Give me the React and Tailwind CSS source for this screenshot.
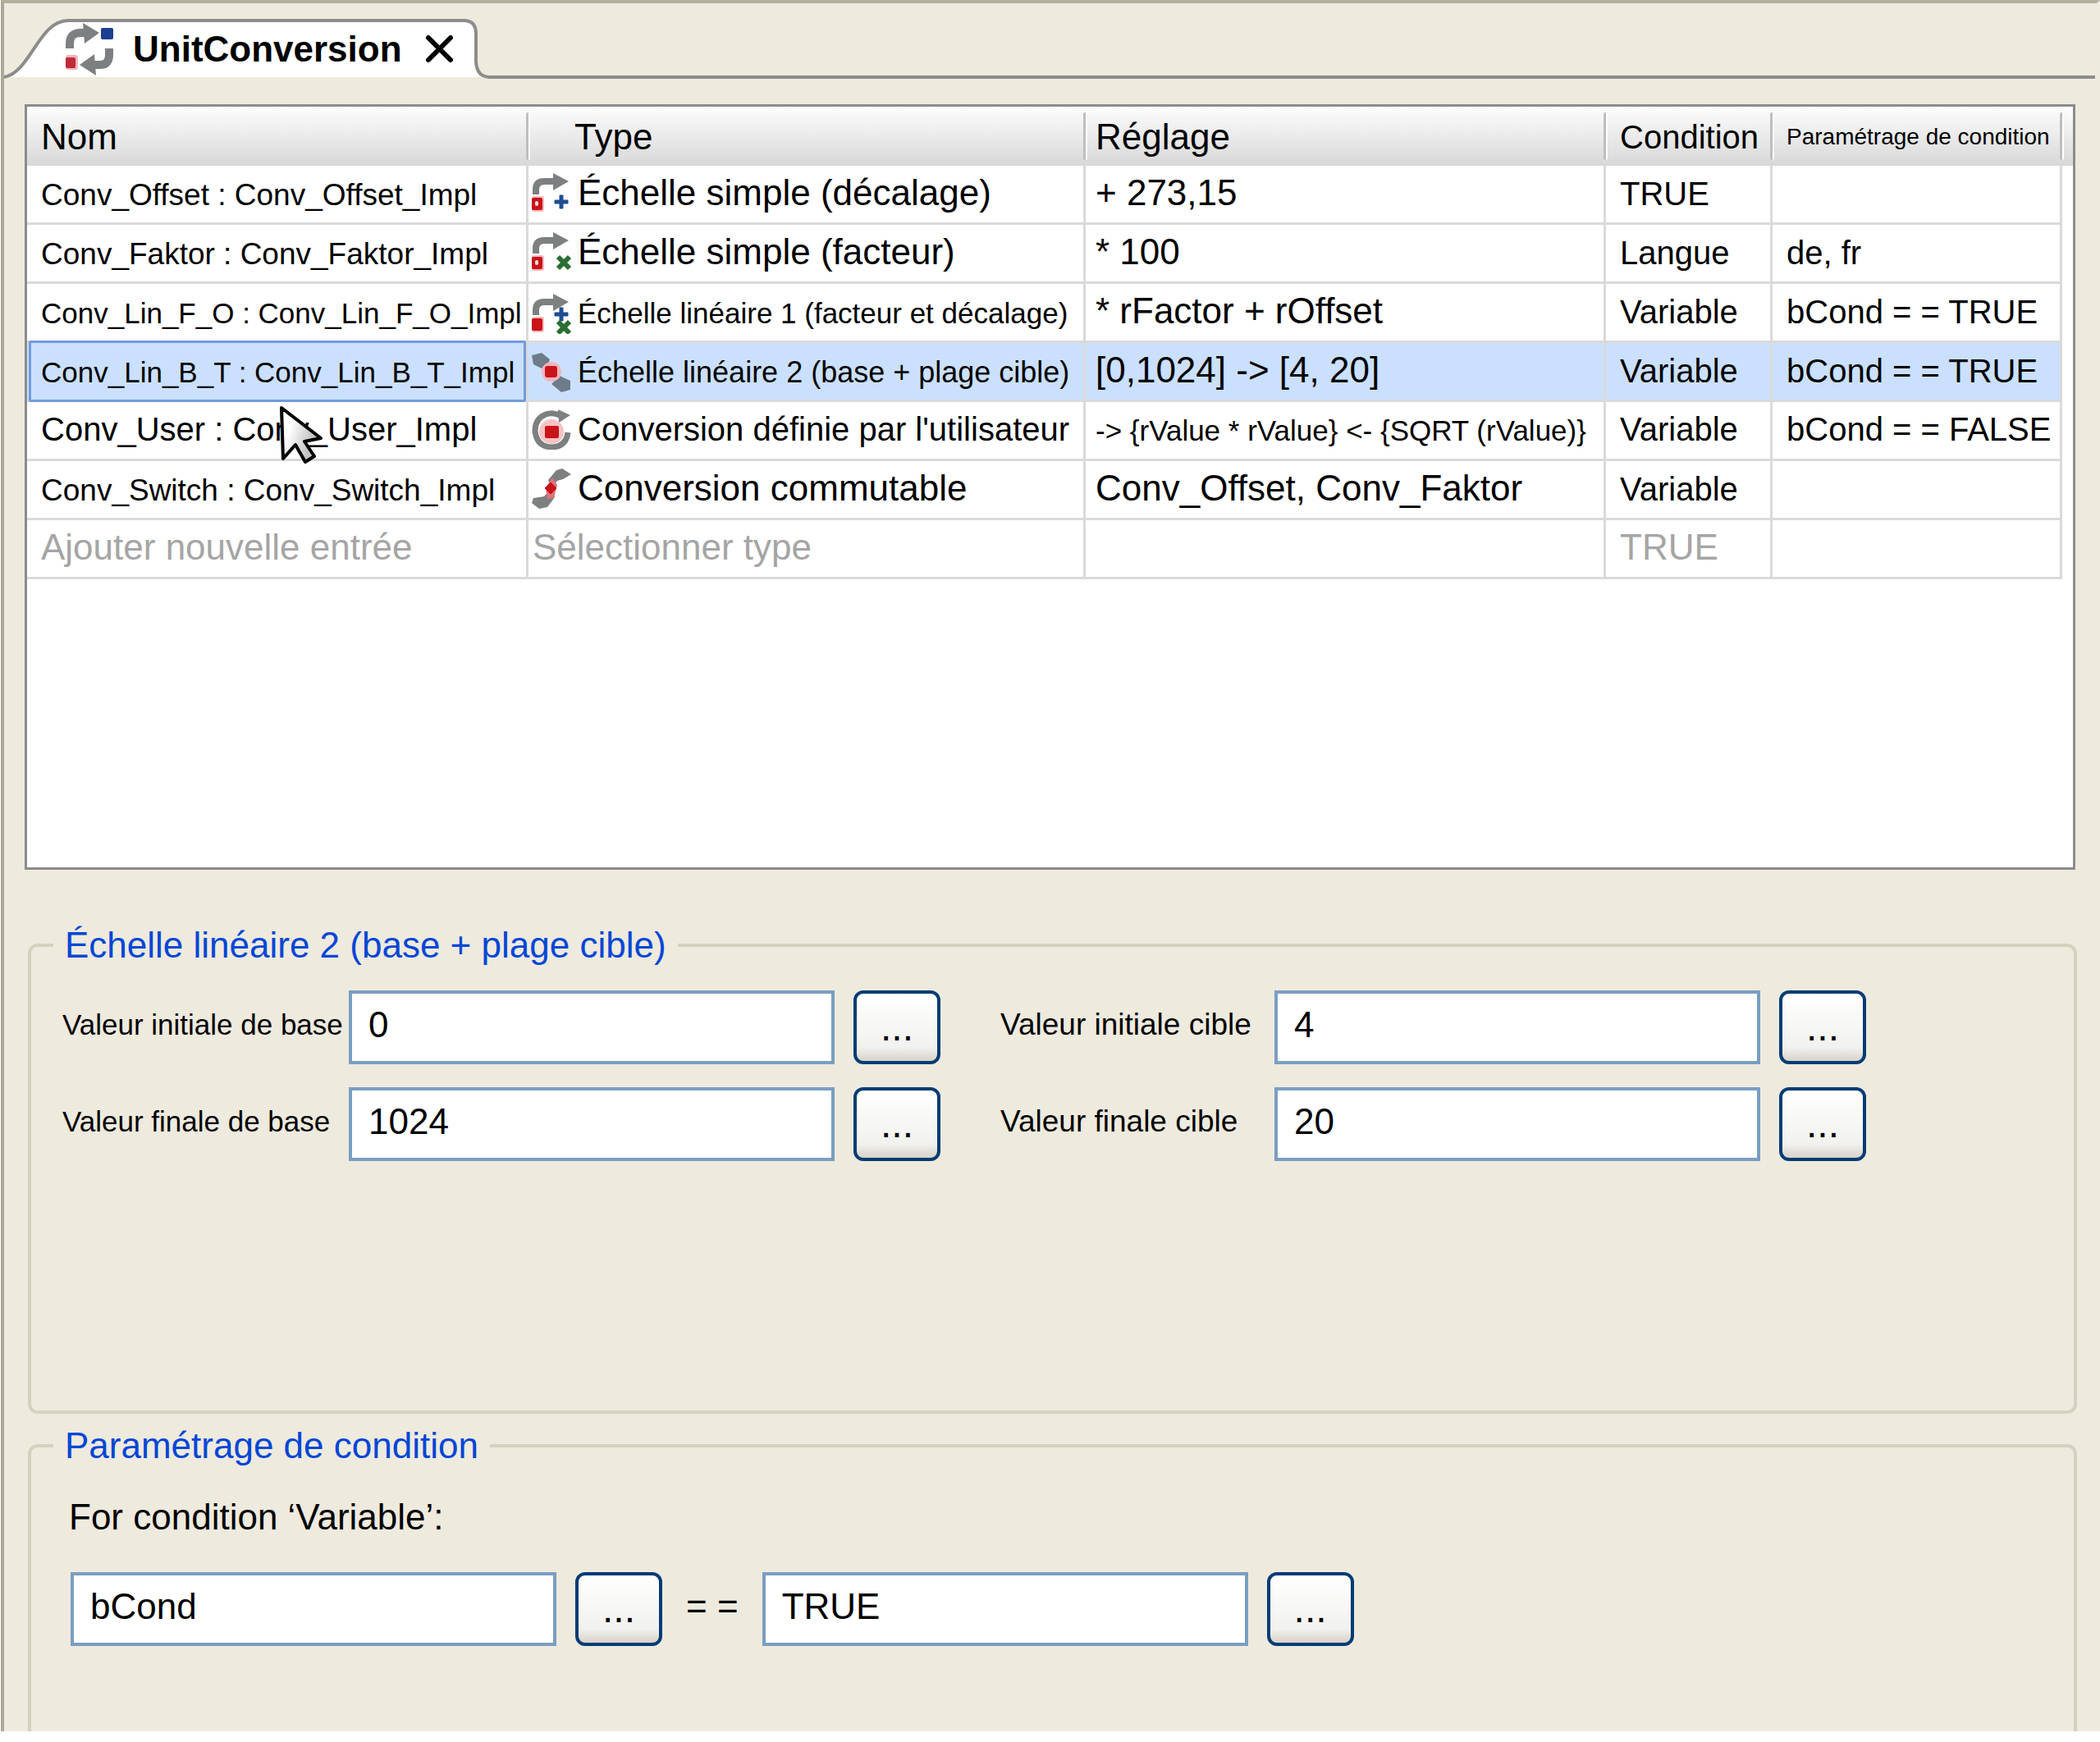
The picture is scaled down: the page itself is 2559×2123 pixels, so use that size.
/**
 * Unit conversion editor
 * Conversion list on top, settings of the selected conversion below
 */

import React, { useState } from 'react';

const GREY = '#7d8080';
const RED = '#c91419';

const BentArrow = () => (
    <>
        <path d="M5 26 V20 Q5 10 15 10 H30" fill="none" stroke={GREY} strokeWidth="8" />
        <path d="M26 0 L45 10 L26 21 Z" fill={GREY} />
    </>
);

const RedBox = ({ hole }) => (
    <>
        <rect x="0" y="28" width="15" height="19" rx="3" fill="#f6b9bb" />
        <rect x="0" y="30" width="13" height="15" rx="2" fill={RED} />
        {hole && <rect x="4" y="34" width="4" height="6" rx="2" fill="#fbdcdc" />}
    </>
);

const Plus = ({ y }) => (
    <path
        d={`M34 ${y - 8} H38 V${y - 2} H44 V${y + 2} H38 V${y + 8} H34 V${y + 2} H28 V${y - 2} H34 Z`}
        fill="#1f4d93"
        stroke="#1f4d93"
        strokeLinejoin="round"
    />
);

const Cross = ({ y }) => (
    <path d={`M32 ${y - 7} L46 ${y + 7} M46 ${y - 7} L32 ${y + 7}`} stroke="#2a6e33" strokeWidth="6" />
);

const ICONS = {
    offset: (
        <>
            <BentArrow />
            <RedBox hole />
            <Plus y={35} />
        </>
    ),
    factor: (
        <>
            <BentArrow />
            <RedBox hole />
            <Cross y={37} />
        </>
    ),
    linear1: (
        <>
            <BentArrow />
            <RedBox />
            <Plus y={25} />
            <Cross y={41} />
        </>
    ),
    linear2: (
        <>
            <path d="M0 3 L12 0 L22 8 L20 14 L12 19 L2 14 Z" fill="#6d7c88" />
            <path d="M24 38 L34 28 L47 34 L47 45 L36 48 Z" fill="#6d7c88" />
            <circle cx="24" cy="23" r="12" fill="#f0b4bd" />
            <rect x="16" y="16" width="15" height="14" rx="3" fill={RED} />
        </>
    ),
    user: (
        <>
            <path d="M34 7 Q25 3 17 6 Q4 11 4 26 Q6 46 25 46 Q42 45 44 28" fill="none" stroke={GREY} strokeWidth="7" />
            <path d="M32 0 L47 7 L33 16 Z" fill={GREY} />
            <circle cx="24" cy="27" r="15" fill="#f6c2c4" />
            <rect x="16" y="20" width="17" height="15" rx="2" fill={RED} />
        </>
    ),
    toggle: (
        <>
            <path d="M24 24 L20 14 L30 2 L37 0 L48 7 L38 13 L31 15 Z" fill={GREY} />
            <path d="M24 24 L28 35 L19 47 L9 49 L0 42 L2 36 L15 34 Z" fill={GREY} />
            <path d="M25 11 L31 20 L27 36 L19 37 L17 24 Z" fill="#dd7377" />
            <path d="M23 17 L30 24 L23 31 L16 24 Z" fill={RED} stroke={RED} />
        </>
    ),
};

const INITIAL_ROWS = [
    { id: 'offset', name: 'Conv_Offset : Conv_Offset_Impl', nameSize: 'text-[37px]', type: 'Échelle simple (décalage)', setting: '+ 273,15', condition: 'TRUE', param: '' },
    { id: 'factor', name: 'Conv_Faktor : Conv_Faktor_Impl', nameSize: 'text-[37px]', type: 'Échelle simple (facteur)', setting: '* 100', condition: 'Langue', param: 'de, fr' },
    { id: 'linear1', name: 'Conv_Lin_F_O : Conv_Lin_F_O_Impl', nameSize: 'text-[35px]', type: 'Échelle linéaire 1 (facteur et décalage)', typeSize: 'text-[35px]', setting: '* rFactor + rOffset', condition: 'Variable', param: 'bCond = = TRUE' },
    { id: 'linear2', name: 'Conv_Lin_B_T : Conv_Lin_B_T_Impl', nameSize: 'text-[35px]', type: 'Échelle linéaire 2 (base + plage cible)', typeSize: 'text-[36px]', setting: '[0,1024] -> [4, 20]', condition: 'Variable', param: 'bCond = = TRUE' },
    { id: 'user', name: 'Conv_User : Conv_User_Impl', nameSize: 'text-[40px]', type: "Conversion définie par l'utilisateur", typeSize: 'text-[40px]', setting: '-> {rValue * rValue} <- {SQRT (rValue)}', settingSize: 'text-[35px]', condition: 'Variable', param: 'bCond = = FALSE' },
    { id: 'toggle', name: 'Conv_Switch : Conv_Switch_Impl', nameSize: 'text-[37px]', type: 'Conversion commutable', setting: 'Conv_Offset, Conv_Faktor', condition: 'Variable', param: '' },
];

const HEADERS = [
    { label: 'Nom', pad: 'pl-[17px]' },
    { label: 'Type', pad: 'pl-14' },
    { label: 'Réglage', pad: 'pl-3' },
    { label: 'Condition', pad: 'pl-[17px]', size: 'text-[40px]' },
    { label: 'Paramétrage de condition', pad: 'pl-[17px]', size: 'text-[28px]' },
];

const CELL = 'h-[72px] border-b-[3px] border-r-[3px] border-[#dadada] pt-2 align-baseline leading-[50px] whitespace-nowrap';

const MousePointer = () => (
    <svg className="absolute left-[306px] top-1 z-10" width="58" height="74" viewBox="0 0 58 74" aria-hidden="true">
        <defs>
            <linearGradient id="pointer" x1="0" y1="0.3" x2="1" y2="0.7">
                <stop offset="0.2" stopColor="#ffffff" />
                <stop offset="0.75" stopColor="#c4c4c4" />
            </linearGradient>
        </defs>
        <path d="M4 3 L52 40 L32 44 L44 62 L33 69 L21 48 L6 65 Z" fill="url(#pointer)" stroke="#000" strokeWidth="4" strokeLinejoin="round" />
    </svg>
);

const Tab = () => (
    <div className="flex h-[92px] items-end">
        <div className="relative h-[73px] w-[590px] flex-none">
            <svg className="absolute left-0 top-0" width="592" height="73" viewBox="0 0 592 73" aria-hidden="true">
                <path d="M0 70 C28 68 44 2 78 2 H560 Q575 2 575 18 V52 Q575 70 590 71 L590 71 H0 Z" fill="#fff" />
                <path d="M0 71 C32 66 42 2 78 2 H560 Q575 2 575 18 V52 Q576 71 592 71" fill="none" stroke="#8c8c8c" strokeWidth="4" />
            </svg>
            <div className="relative flex h-full items-center pl-[75px]">
                <svg width="62" height="64" viewBox="0 0 62 64" aria-hidden="true">
                    <path d="M5 31 V25 Q5 12 18 12 H26" fill="none" stroke={GREY} strokeWidth="10" />
                    <path d="M21 0 L41 12 L23 25 Z" fill={GREY} />
                    <rect x="43" y="6" width="15" height="14" rx="2" fill="#1c3f90" />
                    <path d="M53 31 V39 Q53 51 42 51 H32" fill="none" stroke={GREY} strokeWidth="10" />
                    <path d="M35 38 L17 51 L37 64 Z" fill={GREY} />
                    <rect x="0" y="39" width="15" height="18" rx="3" fill="#f3b5ba" />
                    <rect x="0" y="42" width="12" height="13" rx="2" fill="#c02a38" />
                </svg>
                <span className="pl-5 text-[44px] font-bold">UnitConversion</span>
                <button type="button" aria-label="Fermer" className="ml-7">
                    <svg width="36" height="36" viewBox="0 0 36 36" aria-hidden="true">
                        <path d="M4 4 L31 31 M31 4 L4 31" stroke="#000" strokeWidth="6" strokeLinecap="round" />
                    </svg>
                </button>
            </div>
        </div>
        <div className="mr-0.5 h-1 flex-1 bg-[#8c8c8c]" />
    </div>
);

const ConversionTable = ({ selected, onSelect }) => (
    <div className="h-[933px] border-[3px] border-[#8c8c8c] bg-white pt-0.5">
        <div className="bg-linear-to-b from-[#fcfcfc] to-[#d8d8d8] bg-size-[100%_70px] bg-no-repeat">
            <table className="w-full table-fixed border-separate border-spacing-0 text-left">
                <colgroup>
                    <col className="w-[611px]" />
                    <col className="w-[679px]" />
                    <col />
                    <col className="w-[203px]" />
                    <col className="w-[353px]" />
                    <col className="w-[13px]" />
                </colgroup>
                <thead>
                    <tr>
                        {HEADERS.map(({ label, pad, size = 'text-[44px]' }) => (
                            <th key={label} className={`relative h-[70px] p-0 font-normal whitespace-nowrap ${pad} ${size}`}>
                                {label}
                                <span className="absolute -right-0.5 top-[5px] h-[58px] w-[5px] rounded-sm border-l-[3px] border-[#bebebe] bg-white" />
                            </th>
                        ))}
                        <td />
                    </tr>
                </thead>
                <tbody className="bg-white">
                    {INITIAL_ROWS.map((row) => {
                        const active = row.id === selected;
                        const cell = `${CELL} ${active ? 'bg-[#cbe0fe]' : ''}`;
                        return (
                            <tr key={row.id} onClick={() => onSelect(row.id)}>
                                <td className={`relative pl-[17px] ${cell} ${row.nameSize}`}>
                                    {row.name}
                                    {active && <span className="absolute -bottom-[3px] -top-[3px] left-0.5 right-0 rounded-xs border-[3px] border-[#719bde]" />}
                                    {row.id === 'user' && <MousePointer />}
                                </td>
                                <td className={`pl-1 ${cell} ${row.typeSize || 'text-[44px]'}`}>
                                    <div className="flex items-baseline gap-[7px]">
                                        <svg className="flex-none self-center" width="49" height="49" viewBox="0 0 49 49" aria-hidden="true">
                                            {ICONS[row.id]}
                                        </svg>
                                        <span>{row.type}</span>
                                    </div>
                                </td>
                                <td className={`pl-3 ${cell} ${row.settingSize || 'text-[44px]'}`}>{row.setting}</td>
                                <td className={`pl-[17px] ${cell} text-[40px]`}>{row.condition}</td>
                                <td className={`pl-[17px] ${cell} text-[40px]`}>{row.param}</td>
                                <td />
                            </tr>
                        );
                    })}
                    <tr className="text-[44px] text-[#a5a5a5]">
                        <td className={`pl-[17px] ${CELL}`}>Ajouter nouvelle entrée</td>
                        <td className={`pl-[5px] ${CELL}`}>Sélectionner type</td>
                        <td className={CELL} />
                        <td className={`pl-[17px] ${CELL}`}>TRUE</td>
                        <td className={CELL} />
                        <td />
                    </tr>
                </tbody>
            </table>
        </div>
    </div>
);

const TextBox = ({ id, value, onChange, label }) => (
    <input
        id={id}
        type="text"
        aria-label={label}
        value={value}
        onChange={(e) => onChange(e.target.value)}
        className="h-[90px] w-[592px] border-4 border-[#7a9ec1] bg-white pb-1.5 pl-5 text-[44px] outline-none"
    />
);

const BrowseButton = () => (
    <button
        type="button"
        aria-label="Parcourir"
        className="ml-[23px] h-[90px] w-[106px] flex-none rounded-xl border-4 border-[#003c74] bg-linear-to-b from-white via-[#f1f1ee] via-80% to-[#d8d2c8] text-5xl"
    >
        ...
    </button>
);

const Field = ({ id, label, labelClass, value, onChange }) => (
    <div className="flex items-center">
        <label htmlFor={id} className={`flex-none pb-1.5 whitespace-nowrap ${labelClass}`}>{label}</label>
        <TextBox id={id} value={value} onChange={onChange} />
        <BrowseButton />
    </div>
);

const Group = ({ title, className, children }) => (
    <fieldset className={`border-4 border-[#d3d2bc] ${className}`}>
        <legend className="ml-[27px] px-3.5 text-[44px] leading-[50px] text-[#0046d5]">{title}</legend>
        {children}
    </fieldset>
);

export default function App() {
    const [selected, setSelected] = useState('linear2');
    const [values, setValues] = useState({ baseStart: '0', baseEnd: '1024', targetStart: '4', targetEnd: '20', left: 'bCond', right: 'TRUE' });

    const set = (key) => (value) => setValues((prev) => ({ ...prev, [key]: value }));

    return (
        <div className="bg-white pb-[14px] pl-px font-['Liberation_Sans',Arial,sans-serif] text-black">
            <main className="border-l-4 border-r-4 border-t-4 border-l-[#aba998] border-r-[#eeeade] border-t-[#b3b09e] bg-[#eeeade]">
                <Tab />
                <div className="ml-[25px] mr-[26px] pt-[31px]">
                    <ConversionTable selected={selected} onSelect={setSelected} />
                </div>

                <div className="ml-[29px] mr-6 mt-[67px]">
                    <Group title="Échelle linéaire 2 (base + plage cible)" className="h-[596px] rounded-xl">
                        <div className="flex gap-[73px] pl-[38px] pt-[30px]">
                            <div className="flex flex-col gap-7">
                                <Field id="base-start" label="Valeur initiale de base" labelClass="w-[349px] text-[35px]" value={values.baseStart} onChange={set('baseStart')} />
                                <Field id="base-end" label="Valeur finale de base" labelClass="w-[349px] text-[35px]" value={values.baseEnd} onChange={set('baseEnd')} />
                            </div>
                            <div className="flex flex-col gap-7">
                                <Field id="target-start" label="Valeur initiale cible" labelClass="w-[334px] text-[37px]" value={values.targetStart} onChange={set('targetStart')} />
                                <Field id="target-end" label="Valeur finale cible" labelClass="w-[334px] text-[37px]" value={values.targetEnd} onChange={set('targetEnd')} />
                            </div>
                        </div>
                    </Group>

                    <Group title="Paramétrage de condition" className="mt-[14px] h-[373px] rounded-t-xl border-b-0">
                        <p className="pl-[46px] pt-[37px] text-[44px] leading-[50px]">For condition ‘Variable’:</p>
                        <div className="flex items-center pl-12 pt-[42px]">
                            <TextBox label="Variable" value={values.left} onChange={set('left')} />
                            <BrowseButton />
                            <span className="px-[29px] pb-1.5 text-[44px]">= =</span>
                            <TextBox label="Valeur" value={values.right} onChange={set('right')} />
                            <BrowseButton />
                        </div>
                    </Group>
                </div>
            </main>
        </div>
    );
}
